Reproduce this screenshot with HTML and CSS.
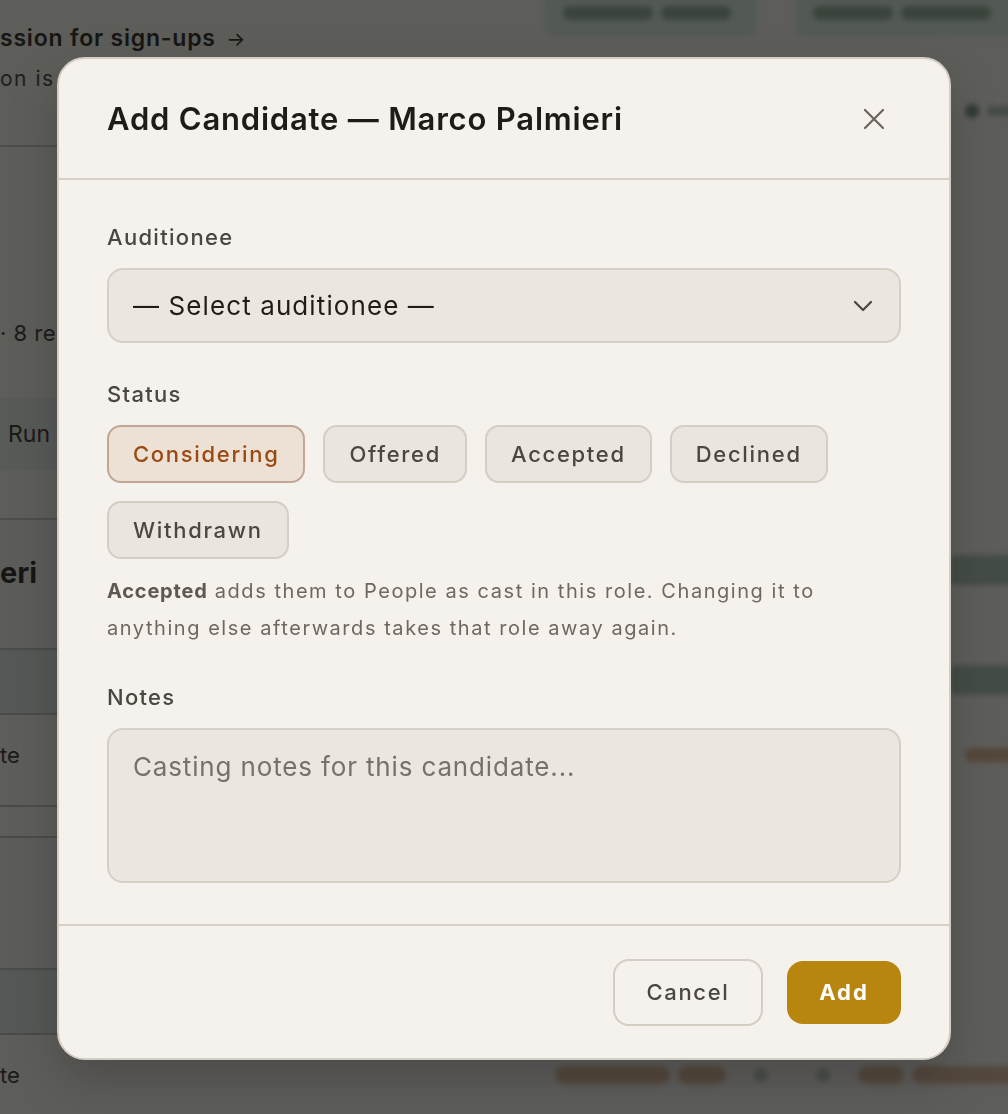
FILE: index.html
```html
<!DOCTYPE html>
<html lang="en">
<head>
<meta charset="utf-8">
<title>Add Candidate</title>
<link rel="stylesheet" href="styles.css">
</head>
<body>
<div class="page">
  <div class="bg-main">
    <div class="bg-top">
      <div class="bg-line bg-link"><span class="cut">Open audition se</span><span>ssion for sign-ups <span class="arrow">→</span></span></div>
      <div class="bg-line bg-sub"><span class="cut">Submissi</span><span>on is open until Friday</span></div>
    </div>
    <div class="bg-line bg-meta"><span class="cut">3 roles </span><span>· 8 rehearsals</span></div>
    <div class="bg-band"><span class="bg-run">Run</span></div>
    <div class="bg-card">
      <div class="bg-line bg-heading"><span class="cut">Marco Palmi</span><span>eri</span></div>
    </div>
    <div class="bg-band bg-band-2"></div>
    <div class="bg-line bg-row"><span class="cut">Add candida</span><span>te</span></div>
    <div class="bg-gap"></div>
    <div class="bg-empty"></div>
    <div class="bg-band bg-band-3"></div>
    <div class="bg-line bg-row"><span class="cut">Add candida</span><span>te</span></div>
  </div>
  <div class="bg-side">
    <div class="side-top">
      <div class="side-btn"><span class="blob b1"></span><span class="blob b2"></span></div>
      <div class="side-btn side-btn-2"><span class="blob b3"></span><span class="blob b4"></span></div>
    </div>
    <div class="side-tag"><span class="dot"></span><span class="blob b5"></span></div>
    <div class="side-line one"></div>
    <div class="side-line two"></div>
    <div class="side-orange o1"></div>
    <div class="side-bottom">
      <span class="orange-blob w1"></span>
      <span class="orange-blob w2"></span>
      <span class="dim-dot"></span>
      <span class="dim-dot"></span>
      <span class="orange-blob w3"></span>
      <span class="orange-blob w4"></span>
    </div>
  </div>
</div>

<div class="overlay">
  <div class="modal" role="dialog" aria-labelledby="modal-title">
    <header class="modal-head">
      <h2 id="modal-title" class="modal-title">Add Candidate — Marco Palmieri</h2>
      <button class="close-btn" aria-label="Close">
        <svg width="22" height="22" viewBox="0 0 22 22" fill="none" stroke="currentColor" stroke-width="2.2" stroke-linecap="round"><path d="M2 2 L20 20 M20 2 L2 20"/></svg>
      </button>
    </header>
    <div class="modal-body">
      <div class="field-label">Auditionee</div>
      <div class="select">
        <span class="select-text">— Select auditionee —</span>
        <svg class="chev" width="20" height="12" viewBox="0 0 20 12" fill="none" stroke="currentColor" stroke-width="2.2" stroke-linecap="round" stroke-linejoin="round"><path d="M2 2 L10 10 L18 2"/></svg>
      </div>

      <div class="field-label status-label">Status</div>
      <div class="chips">
        <button class="chip chip-active">Considering</button>
        <button class="chip">Offered</button>
        <button class="chip">Accepted</button>
        <button class="chip">Declined</button>
        <button class="chip">Withdrawn</button>
      </div>
      <p class="help"><b>Accepted</b> adds them to People as cast in this role. Changing it to anything else afterwards takes that role away again.</p>

      <div class="field-label notes-label">Notes</div>
      <div class="textarea">Casting notes for this candidate...</div>
    </div>
    <footer class="modal-foot">
      <button class="btn btn-cancel">Cancel</button>
      <button class="btn btn-add">Add</button>
    </footer>
  </div>
</div>
</body>
</html>
```

FILE: styles.css
```css
* { box-sizing: border-box; }
html, body { margin: 0; padding: 0; }
body {
  width: 1008px;
  height: 1114px;
  overflow: hidden;
  font-family: Inter, "Noto Sans", "Liberation Sans", sans-serif;
  background: #f3f1ec;
  color: #1f1c18;
}

/* ---------- background page ---------- */
.page {
  display: flex;
  height: 1114px;
}
.bg-main {
  width: 545px;
  flex: none;
}
.bg-line {
  display: flex;
  white-space: nowrap;
}
.cut {
  width: 0;
  display: flex;
  justify-content: flex-end;
  white-space: nowrap;
}
.bg-top {
  height: 147px;
  padding-top: 23px;
  border-bottom: 2px solid #c9c4bb;
}
.bg-link {
  font-size: 23px;
  font-weight: 600;
  letter-spacing: 0.8px;
  color: #1f1c18;
  line-height: 30px;
}
.bg-link .arrow { font-weight: 400; font-size: 20px; margin-left: 4px; }
.bg-sub {
  margin-top: 10px;
  font-size: 21px;
  letter-spacing: 1.5px;
  color: #3a3630;
  line-height: 30px;
}
.bg-meta {
  margin-top: 171px;
  font-size: 22px;
  line-height: 30px;
  color: #33302b;
  letter-spacing: 0.5px;
}
.bg-band {
  margin-top: 50px;
  height: 72px;
  background: #e3e9e5;
  display: flex;
  align-items: center;
  padding-left: 8px;
}
.bg-run { font-size: 23px; color: #2a2824; }
.bg-card {
  margin-top: 48px;
  height: 130px;
  border-top: 2px solid #c9c4bb;
  background: #eef2ef;
  padding-top: 33px;
}
.bg-heading {
  font-size: 29px;
  font-weight: 700;
  color: #1f1c18;
  line-height: 40px;
}
.bg-band-2 {
  margin-top: 0;
  height: 67px;
  background: #dbe3df;
  border-top: 2px solid #b5c0ba;
  border-bottom: 2px solid #b5c0ba;
}
.bg-row {
  font-size: 22px;
  color: #2f2c28;
  height: 90px;
  line-height: 80px;
}
.bg-gap {
  height: 33px;
  border-top: 2px solid #b9bdb8;
  border-bottom: 2px solid #b9bdb8;
  background: #f3f1ec;
}
.bg-empty { height: 130px; background: #eef2ef; }
.bg-band-3 {
  margin-top: 0;
  height: 67px;
  background: #dbe3df;
  border-top: 2px solid #b5c0ba;
  border-bottom: 2px solid #b5c0ba;
}

.bg-side {
  flex: 1;
  position: relative;
  filter: blur(2.5px);
}
.side-top { display: flex; gap: 38px; margin-top: -10px; }
.side-btn {
  width: 212px;
  height: 46px;
  border-radius: 10px;
  background: #d3e6da;
  display: flex;
  align-items: center;
  gap: 8px;
  padding: 0 18px;
}
.side-btn-2 { width: 230px; }
.blob { height: 14px; border-radius: 7px; background: #8aa892; display: block; }
.b1 { width: 90px; } .b2 { width: 70px; } .b3 { width: 80px; } .b4 { width: 90px; }
.side-tag { position: absolute; left: 420px; top: 104px; display: flex; gap: 8px; align-items: center; }
.dot { width: 14px; height: 14px; border-radius: 7px; background: #6f8a76; display: block; }
.b5 { width: 50px; height: 10px; background: #a9bcae; }
.side-line { position: absolute; left: 405px; height: 30px; background: #a8c0b0; border-radius: 6px; }
.side-line.one { top: 555px; width: 80px; }
.side-line.two { top: 665px; width: 80px; }
.side-orange { position: absolute; left: 420px; top: 748px; width: 50px; height: 14px; background: #d9b08e; border-radius: 7px; }
.side-bottom {
  position: absolute;
  left: 10px;
  top: 1066px;
  display: flex;
  gap: 8px;
  align-items: center;
}
.orange-blob { height: 18px; border-radius: 9px; background: #d7b497; display: block; }
.w1 { width: 115px; } .w2 { width: 48px; } .w3 { width: 46px; } .w4 { width: 118px; }
.dim-dot { width: 14px; height: 14px; border-radius: 7px; background: #b9c4bd; display: block; margin: 0 20px; }

/* ---------- overlay + modal ---------- */
.overlay {
  position: fixed;
  inset: 0;
  background: rgba(20, 20, 18, 0.67);
  display: flex;
  align-items: flex-start;
  justify-content: center;
  padding-top: 57px;
}
.modal {
  width: 894px;
  height: 1003px;
  background: #f5f2ed;
  border: 2px solid #d3cdc3;
  border-radius: 28px;
  display: flex;
  flex-direction: column;
  overflow: hidden;
  box-shadow: 0 20px 50px rgba(0,0,0,0.2);
}
.modal-head {
  height: 121px;
  flex: none;
  display: flex;
  align-items: center;
  justify-content: space-between;
  padding: 0 64px 0 48px;
  border-bottom: 2px solid #d6d0c6;
}
.modal-title {
  margin: 0;
  font-size: 31px;
  font-weight: 600;
  letter-spacing: 0.8px;
  color: #1f1c18;
}
.close-btn {
  border: 0;
  background: none;
  padding: 0;
  color: #6b645b;
  display: flex;
  cursor: pointer;
}

.modal-body {
  flex: 1;
  padding: 43px 48px 0 48px;
}
.field-label {
  font-size: 22px;
  line-height: 28px;
  font-weight: 500;
  color: #4a4640;
  letter-spacing: 1.3px;
}
.select {
  margin-top: 17px;
  height: 75px;
  border: 2px solid #d5d0c6;
  border-radius: 16px;
  background: #ebe7e0;
  display: flex;
  align-items: center;
  justify-content: space-between;
  padding: 0 26px 0 24px;
}
.select-text { font-size: 26px; letter-spacing: 1.1px; color: #201d19; }
.chev { color: #4a4640; }

.status-label { margin-top: 37px; }
.chips {
  margin-top: 17px;
  display: flex;
  flex-wrap: wrap;
  gap: 18px;
  width: 760px;
}
.chip {
  height: 58px;
  padding: 0 24px;
  border: 2px solid #d4cec4;
  border-radius: 14px;
  background: #eae6df;
  font-family: inherit;
  font-size: 22px;
  letter-spacing: 1.7px;
  font-weight: 500;
  color: #4a4640;
  cursor: pointer;
}
.chip-active {
  background: #ede0d5;
  border-color: #c2a797;
  color: #9a4a10;
}
.help {
  margin: 14px 0 0;
  font-size: 20px;
  line-height: 37px;
  letter-spacing: 1.55px;
  color: #6f685e;
  max-width: 760px;
}
.help b { font-weight: 700; color: #5e584f; letter-spacing: 0.8px; }
.notes-label { margin-top: 36px; }
.textarea {
  margin-top: 17px;
  height: 155px;
  border: 2px solid #d5d0c6;
  border-radius: 16px;
  background: #ebe7e0;
  padding: 20px 24px;
  font-size: 26px;
  line-height: 34px;
  letter-spacing: 0.85px;
  color: #78716a;
}

.modal-foot {
  height: 134px;
  flex: none;
  border-top: 2px solid #d6d0c6;
  display: flex;
  align-items: center;
  justify-content: flex-end;
  gap: 24px;
  padding: 0 48px;
}
.btn {
  font-family: inherit;
  font-size: 22px;
  border-radius: 16px;
  cursor: pointer;
}
.btn-cancel {
  height: 67px;
  width: 150px;
  background: transparent;
  border: 2px solid #d3cdc3;
  color: #4a4640;
  font-weight: 500;
  letter-spacing: 1.7px;
}
.btn-add {
  height: 63px;
  width: 114px;
  background: #b8860f;
  border: 0;
  color: #fff;
  font-weight: 700;
  letter-spacing: 2px;
}
```
